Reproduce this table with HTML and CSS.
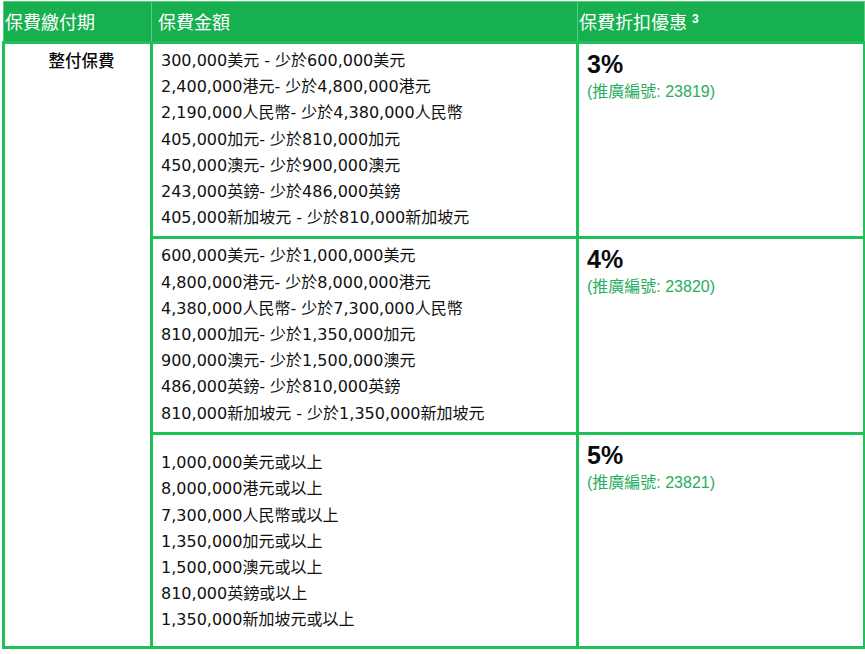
FILE: index.html
```html
<!DOCTYPE html>
<html lang="zh-Hant">
<head>
<meta charset="utf-8">
<link rel="stylesheet" href="styles.css">
</head>
<body>
<table class="tbl">
  <colgroup>
    <col class="c1"><col class="c2"><col class="c3">
  </colgroup>
  <thead>
    <tr class="head">
      <th>保費繳付期</th>
      <th class="h2">保費金額</th>
      <th class="h3">保費折扣優惠 <sup>3</sup></th>
    </tr>
  </thead>
  <tbody>
    <tr class="r1">
      <td class="term" rowspan="3">整付保費</td>
      <td class="amt">
        <div>300,000美元 - 少於600,000美元</div>
        <div>2,400,000港元- 少於4,800,000港元</div>
        <div>2,190,000人民幣- 少於4,380,000人民幣</div>
        <div>405,000加元- 少於810,000加元</div>
        <div>450,000澳元- 少於900,000澳元</div>
        <div>243,000英鎊- 少於486,000英鎊</div>
        <div>405,000新加坡元 - 少於810,000新加坡元</div>
      </td>
      <td class="disc">
        <div class="pct">3%</div>
        <div class="code">(推廣編號: 23819)</div>
      </td>
    </tr>
    <tr class="r2">
      <td class="amt">
        <div>600,000美元- 少於1,000,000美元</div>
        <div>4,800,000港元- 少於8,000,000港元</div>
        <div>4,380,000人民幣- 少於7,300,000人民幣</div>
        <div>810,000加元- 少於1,350,000加元</div>
        <div>900,000澳元- 少於1,500,000澳元</div>
        <div>486,000英鎊- 少於810,000英鎊</div>
        <div>810,000新加坡元 - 少於1,350,000新加坡元</div>
      </td>
      <td class="disc">
        <div class="pct">4%</div>
        <div class="code">(推廣編號: 23820)</div>
      </td>
    </tr>
    <tr class="r3">
      <td class="amt mid">
        <div>1,000,000美元或以上</div>
        <div>8,000,000港元或以上</div>
        <div>7,300,000人民幣或以上</div>
        <div>1,350,000加元或以上</div>
        <div>1,500,000澳元或以上</div>
        <div>810,000英鎊或以上</div>
        <div>1,350,000新加坡元或以上</div>
      </td>
      <td class="disc">
        <div class="pct">5%</div>
        <div class="code">(推廣編號: 23821)</div>
      </td>
    </tr>
  </tbody>
</table>
</body>
</html>
```

FILE: styles.css
```css
html, body {
  margin: 0;
  padding: 0;
  background: #ffffff;
}

body {
  font-family: "DejaVu Sans", "Noto Sans CJK TC", sans-serif;
  color: #111111;
}

.tbl {
  margin: 1px 0 0 2px;
  width: 861px;
  table-layout: fixed;
  border-collapse: collapse;
}

.c1 { width: 148px; }
.c2 { width: 426px; }
.c3 { width: 287px; }

.head {
  background: #17b04f;
  height: 41px;
}

.head th {
  border: 1px solid #5ccc82;
  color: #ffffff;
  font-family: "Liberation Sans", "Noto Sans CJK TC", sans-serif;
  font-weight: normal;
  font-size: 18px;
  text-align: left;
  padding: 0 0 2px 1px;
  vertical-align: middle;
  white-space: nowrap;
}

.head .h2 { padding-left: 6px; }
.head .h3 { padding-left: 1px; }

.head sup {
  font-size: 12px;
  font-weight: bold;
  vertical-align: 6px;
}

tbody td {
  border: 3px solid #20c058;
  vertical-align: top;
  font-size: 16px;
  line-height: 26.2px;
}

.term {
  text-align: center;
  font-family: "Liberation Sans", "Noto Sans CJK TC", sans-serif;
  font-size: 16.5px;
  font-weight: 500;
  color: #0a0a0a;
  padding: 4px 0 0 8px;
}

.amt {
  padding: 4px 6px 5px 8px;
  white-space: nowrap;
}

.r3 { height: 214px; }

.amt.mid {
  vertical-align: middle;
  padding-top: 8px;
}

.disc {
  padding: 4px 8px 0 8px;
}

.pct {
  font-family: "Liberation Sans", sans-serif;
  font-weight: bold;
  font-size: 25px;
  line-height: 32px;
  color: #0b0b0b;
}

.code {
  font-family: "Liberation Sans", "Noto Sans CJK TC", sans-serif;
  font-size: 16px;
  line-height: 24px;
  color: #28ad60;
}
```
